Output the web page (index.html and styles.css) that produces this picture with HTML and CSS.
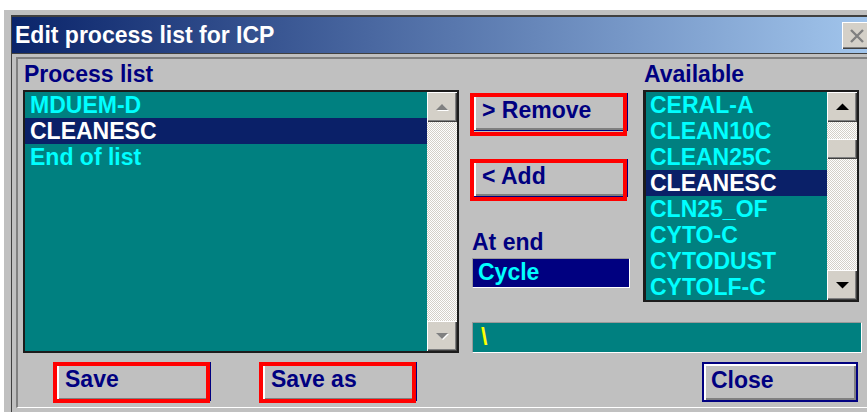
FILE: index.html
```html
<!DOCTYPE html>
<html lang="en">
<head>
<meta charset="utf-8">
<title>Edit process list for ICP</title>
<link rel="stylesheet" href="styles.css">
</head>
<body>
<div class="window">
  <div class="frame">
    <div class="titlebar">
      <span class="title">Edit process list for ICP</span>
      <button class="tb-close" aria-label="Close">
        <svg width="16" height="14" viewBox="0 0 16 14"><path d="M2 1 L14 13 M14 1 L2 13" stroke="#808080" stroke-width="2.4" fill="none"/></svg>
      </button>
    </div>
    <div class="client">
      <div class="panel">
        <div class="col-left">
          <div class="label">Process list</div>
          <div class="listbox list-process">
            <ul class="items">
              <li>MDUEM-D</li>
              <li class="sel">CLEANESC</li>
              <li>End of list</li>
            </ul>
            <div class="scrollbar">
              <div class="sb-btn">
                <svg width="15" height="8" viewBox="0 0 15 8"><polygon points="1,7 7,1 13,7" fill="#fff" transform="translate(1,1)"/><polygon points="1,7 7,1 13,7" fill="#808080"/></svg>
              </div>
              <div class="sb-track"></div>
              <div class="sb-btn">
                <svg width="15" height="8" viewBox="0 0 15 8"><polygon points="1,1 13,1 7,7" fill="#fff" transform="translate(1,1)"/><polygon points="1,1 13,1 7,7" fill="#808080"/></svg>
              </div>
            </div>
          </div>
          <div class="btn-row">
            <div class="mark"><button class="btn">Save</button></div>
            <div class="mark"><button class="btn">Save as</button></div>
          </div>
        </div>
        <div class="col-right">
          <div class="top-row">
            <div class="col-mid">
              <div class="mark tall"><button class="btn">&gt; Remove</button></div>
              <div class="mark add"><button class="btn">&lt; Add</button></div>
              <div class="label atend">At end</div>
              <div class="field cycle">Cycle</div>
            </div>
            <div class="col-avail">
              <div class="label">Available</div>
              <div class="listbox list-avail">
                <ul class="items">
                  <li>CERAL-A</li>
                  <li>CLEAN10C</li>
                  <li>CLEAN25C</li>
                  <li class="sel">CLEANESC</li>
                  <li>CLN25_OF</li>
                  <li>CYTO-C</li>
                  <li>CYTODUST</li>
                  <li>CYTOLF-C</li>
                </ul>
                <div class="scrollbar">
                  <div class="sb-btn">
                    <svg width="15" height="8" viewBox="0 0 15 8"><polygon points="1,7 7.5,0.5 14,7" fill="#000"/></svg>
                  </div>
                  <div class="sb-btn sb-thumb"></div>
                  <div class="sb-track"></div>
                  <div class="sb-btn">
                    <svg width="15" height="8" viewBox="0 0 15 8"><polygon points="1,1 14,1 7.5,7.5" fill="#000"/></svg>
                  </div>
                </div>
              </div>
            </div>
          </div>
          <div class="field path">\</div>
          <div class="close-row"><button class="btn close">Close</button></div>
        </div>
      </div>
    </div>
  </div>
</div>
</body>
</html>
```
FILE: styles.css
```css
html, body {
  margin: 0;
  width: 867px;
  height: 412px;
  overflow: hidden;
  background: #ffffff;
  font-family: "Liberation Sans", Arial, sans-serif;
}

/* dialog window */
.window {
  margin: 10px 0 0 4px;
  width: 890px;
  height: 410px;
  padding: 5px 0 0 7px;
  box-sizing: border-box;
  background: #c0c0c0;
}

.frame {
  height: 100%;
  box-sizing: border-box;
  border-top: 2px solid #404040;
  border-left: 1px solid #404040;
}

.titlebar {
  height: 36px;
  display: flex;
  align-items: center;
  padding-left: 3px;
  background: linear-gradient(to right, #0a246a 0%, #a6caf0 100%);
  border-bottom: 1px solid #404040;
}

.title {
  flex: 1;
  color: #ffffff;
  font-weight: bold;
  font-size: 23px;
  line-height: 36px;
  white-space: nowrap;
}

.tb-close {
  width: 30px;
  height: 27px;
  margin: 1px 22px 0 0;
  padding: 0;
  border: 0;
  background: #d4d0c8;
  box-shadow: inset 1px 1px #ffffff, inset -1px -1px #404040, inset -2px -2px #808080;
  display: flex;
  align-items: center;
  justify-content: center;
}

.client {
  padding: 3px 0 0 4px;
}

.panel {
  display: flex;
  padding: 0 0 4px 5px;
  border-top: 2px solid #808080;
  border-left: 2px solid #808080;
  border-bottom: 1px solid #ffffff;
}

/* columns */
.col-left {
  width: 436px;
  display: flex;
  flex-direction: column;
}

.col-right {
  width: 392px;
  margin-left: 11px;
  display: flex;
  flex-direction: column;
}

.top-row {
  display: flex;
  height: 243px;
}

.col-mid {
  width: 160px;
  padding-top: 33px;
  box-sizing: border-box;
}

.col-avail {
  width: 216px;
  margin-left: 13px;
}

.label {
  height: 31px;
  line-height: 31px;
  padding-left: 1px;
  color: #000080;
  font-weight: bold;
  font-size: 23px;
  white-space: nowrap;
}

/* list boxes */
.listbox {
  display: flex;
  box-sizing: border-box;
  border: 2px solid #1c1c1c;
  background: #008080;
}

.list-process {
  height: 263px;
}

.list-avail {
  height: 212px;
  border-left-width: 3px;
}

.items {
  flex: 1;
  list-style: none;
  margin: 0;
  padding: 0;
}

.items li {
  height: 26px;
  line-height: 26px;
  padding-left: 5px;
  color: #00ffff;
  font-weight: bold;
  font-size: 23px;
  white-space: nowrap;
}

.items li.sel {
  background: #0a2068;
  color: #ffffff;
}

.list-avail .items li {
  padding-left: 4px;
}

.scrollbar {
  width: 30px;
  display: flex;
  flex-direction: column;
  background: repeating-conic-gradient(#d4d0c8 0 25%, #ffffff 0 50%) 0 0 / 2px 2px;
}

.sb-btn {
  height: 30px;
  flex: none;
  display: flex;
  align-items: center;
  justify-content: center;
  background: #d4d0c8;
  box-shadow: inset 1px 1px #ffffff, inset -1px -1px #404040, inset -2px -2px #808080;
}

.sb-thumb {
  height: 20px;
  margin-top: 17px;
}

.sb-track {
  flex: 1;
}

/* push buttons */
.btn {
  display: flex;
  align-items: center;
  padding: 0 0 4px 8px;
  box-sizing: border-box;
  border: 1px solid #000080;
  background: #c0c0c0;
  box-shadow: inset 2px 2px #ffffff, inset -2px -2px #808080;
  color: #000080;
  font-family: "Liberation Sans", Arial, sans-serif;
  font-weight: bold;
  font-size: 23px;
  white-space: nowrap;
}

/* red highlight frame drawn over a button */
.mark {
  position: relative;
  width: 157px;
  height: 41px;
}

.mark::after {
  content: "";
  position: absolute;
  inset: 0;
  border: 4px solid #ff0000;
  pointer-events: none;
}

.mark .btn {
  width: 155px;
  height: 39px;
  margin: 0 0 0 3px;
}

.mark.tall {
  height: 43px;
}

.mark.tall .btn {
  margin-top: 1px;
  height: 38px;
}

.mark.add {
  height: 42px;
  margin-top: 23px;
}

.mark.add .btn {
  margin-top: 1px;
  height: 38px;
}

.btn-row {
  display: flex;
  gap: 49px;
  margin-top: 9px;
  padding-left: 30px;
}

.atend {
  margin-top: 28px;
  height: 26px;
  line-height: 26px;
  padding-left: 2px;
}

/* edit fields */
.field {
  box-sizing: border-box;
  border-style: solid;
  border-width: 1px;
  border-color: #9a9a9a #ffffff #ffffff #9a9a9a;
  font-weight: bold;
  font-size: 23px;
  white-space: nowrap;
}

.cycle {
  width: 158px;
  height: 30px;
  margin: 3px 0 0 2px;
  padding-left: 5px;
  line-height: 27px;
  background: #000080;
  color: #00ffff;
}

.path {
  width: 390px;
  height: 31px;
  margin: 20px 0 0 2px;
  padding-left: 8px;
  line-height: 29px;
  background: #008080;
  color: #ffff00;
}

.close-row {
  margin-top: 9px;
  padding-left: 232px;
}

.btn.close {
  width: 156px;
  height: 40px;
  padding-left: 7px;
  border: 2px solid #000080;
}
```
